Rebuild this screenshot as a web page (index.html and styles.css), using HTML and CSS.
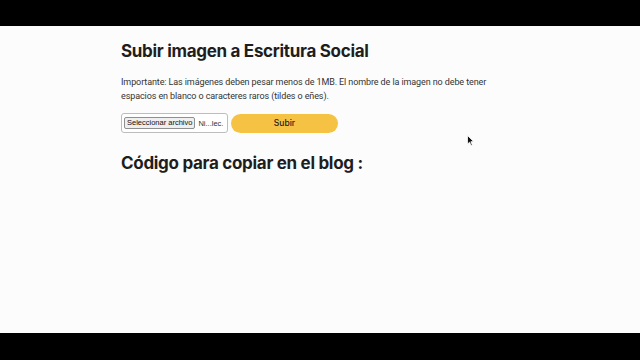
FILE: index.html
```html
<!DOCTYPE html>
<html lang="es">
<head>
<meta charset="utf-8">
<title>Subir imagen a Escritura Social</title>
<link rel="stylesheet" href="styles.css">
</head>
<body>
<div class="screen">
  <div class="bar"></div>
  <main class="page">
    <div class="container">
      <h1 class="title">Subir imagen a Escritura Social</h1>
      <p class="note">Importante: Las imágenes deben pesar menos de 1MB. El nombre de la imagen no debe tener espacios en blanco o caracteres raros (tildes o eñes).</p>
      <form class="upload">
        <div class="file">
          <span class="file-btn">Seleccionar archivo</span>
          <span class="file-name">Ni...lec.</span>
        </div>
        <button type="button" class="submit">Subir</button>
      </form>
      <h2 class="subtitle">Código para copiar en el blog :</h2>
    </div>
    <svg class="cursor" width="8" height="12" viewBox="0 0 8 12"><path d="M0.5 0.5 L0.5 9 L2.6 7.2 L4 10.5 L5.3 9.9 L3.9 6.7 L6.6 6.6 Z" fill="#111" stroke="#fff" stroke-width="0.8"/></svg>
  </main>
  <div class="bar bottom"></div>
</div>
</body>
</html>
```
FILE: styles.css
```css
html, body {
  margin: 0;
  padding: 0;
  background: #000;
}
.screen {
  width: 640px;
  height: 360px;
  display: flex;
  flex-direction: column;
}
.bar {
  height: 26px;
  background: #000;
  flex: none;
}
.bar.bottom {
  height: 27px;
}
.page {
  position: relative;
  flex: 1;
  background: #fcfcfc;
  font-family: Inter, "Noto Sans", sans-serif;
  color: #222;
}
.container {
  width: 398px;
  margin: 0 auto;
  padding-top: 13px;
}
.title {
  margin: 0;
  font-size: 17px;
  font-weight: 700;
  line-height: 24px;
  letter-spacing: -0.3px;
  color: #1e1e1e;
}
.note {
  margin: 12px 0 0;
  width: 380px;
  font-family: Roboto, Inter, sans-serif;
  font-size: 9px;
  line-height: 14px;
  letter-spacing: -0.1px;
  color: #333;
}
.upload {
  margin-top: 10px;
  display: flex;
  align-items: center;
  gap: 3px;
}
.file {
  box-sizing: border-box;
  width: 107px;
  height: 20px;
  border: 1px solid #bdbdbd;
  border-radius: 3px;
  background: #fff;
  display: flex;
  align-items: center;
  padding-left: 2px;
  gap: 3px;
  font-family: "Liberation Sans", Arial, sans-serif;
  font-size: 7.5px;
  color: #333;
  overflow: hidden;
}
.file-btn {
  box-sizing: border-box;
  height: 12px;
  padding: 0 2px;
  border: 1px solid #8f8f8f;
  border-radius: 2px;
  background: #efefef;
  line-height: 10px;
  color: #111;
  white-space: nowrap;
}
.file-name {
  white-space: nowrap;
}
.submit {
  width: 107px;
  height: 19px;
  border: none;
  border-radius: 10px;
  background: #f5c243;
  font-family: Inter, sans-serif;
  font-weight: 500;
  font-size: 8.5px;
  color: #1e1e1e;
  padding: 0;
}
.subtitle {
  margin: 18px 0 0;
  font-size: 17px;
  font-weight: 700;
  line-height: 24px;
  letter-spacing: -0.3px;
  color: #1e1e1e;
}
.cursor {
  position: absolute;
  left: 467px;
  top: 109px;
}
```
